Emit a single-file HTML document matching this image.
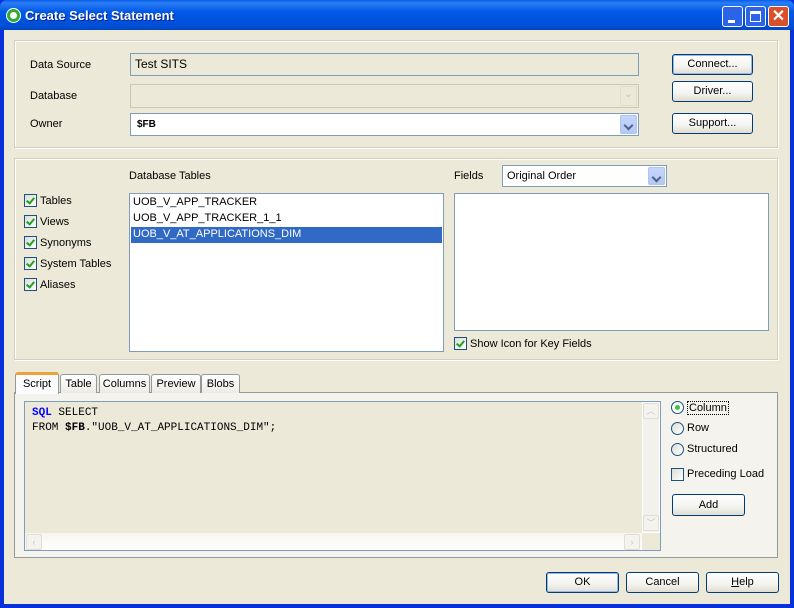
<!DOCTYPE html>
<html><head><style>
*{box-sizing:border-box;margin:0;padding:0}
body{width:794px;height:608px;overflow:hidden;font-family:"Liberation Sans",sans-serif;font-size:11px;color:#000;background:#0831d9;position:relative}
.a{position:absolute}
#title{left:0;top:0;width:794px;height:30px;background:linear-gradient(#0a5fe8,#2b7df5 10%,#0058e6 40%,#0050d8 85%,#0046c0);border-radius:7px 7px 0 0}
#client{left:4px;top:30px;width:786px;height:574px;background:#ece9d8}
.grp{border:1px solid #d0d0bf;box-shadow:inset 1px 1px 0 #fff,1px 1px 0 #fff}
.btn{border:1px solid #003c74;border-radius:3px;background:linear-gradient(#fff,#f3f3ef 60%,#e0ddd0);text-align:center;line-height:19px;font-size:11px}
.edit{border:1px solid #7f9db9;background:#fff}
.cb{width:13px;height:13px;border:1px solid #1c5180;background:linear-gradient(135deg,#dcdcd5,#fff)}
.cb.on::after{content:"";position:absolute;left:3px;top:1px;width:3px;height:6px;border:solid #21a121;border-width:0 2px 2px 0;transform:rotate(40deg)}
.dd{width:17px;border-radius:2px;background:linear-gradient(#c6d6fc,#b4c8f6);border:1px solid #b0c4f0}
.dd::after{content:"";position:absolute;left:4px;top:6px;width:5px;height:5px;border:solid #4d6185;border-width:0 2px 2px 0;transform:rotate(45deg)}
.rad{width:13px;height:13px;border:1px solid #1c5180;border-radius:50%;background:linear-gradient(135deg,#dcdcd5,#fff)}
.tab{top:374px;height:19px;border:1px solid #919b9c;border-bottom:none;border-radius:3px 3px 0 0;background:linear-gradient(#fff,#ecebe5);text-align:center;line-height:18px}
.mono{font-family:"Liberation Mono",monospace;font-size:11px}
.sb{background:#f3f1ec}
.arr{width:16px;height:16px;border:1px solid #e0ded4;border-radius:2px;background:#f4f3ee;color:#c8c6bc;font-size:9px;text-align:center;line-height:14px}
</style></head><body>
<div class="a" id="title"></div>
<div class="a" style="left:6px;top:8px;width:15px;height:15px;border-radius:50%;background:#3a3;border:1px solid #fff"><div class="a" style="left:3px;top:3px;width:7px;height:7px;border-radius:50%;background:#fff"></div></div>
<div class="a" style="left:25px;top:8px;color:#fff;font-weight:bold;font-size:13px;text-shadow:1px 1px #0a1e8a">Create Select Statement</div>
<div class="a" style="left:722px;top:6px;width:21px;height:21px;border:1px solid #fff;border-radius:3px;background:#2c64e8"><div class="a" style="left:5px;top:13px;width:7px;height:3px;background:#fff"></div></div>
<div class="a" style="left:745px;top:6px;width:21px;height:21px;border:1px solid #fff;border-radius:3px;background:#2c64e8"><div class="a" style="left:4px;top:4px;width:11px;height:11px;border:1px solid #fff;border-top-width:3px"></div></div>
<div class="a" style="left:768px;top:6px;width:21px;height:21px;border:1px solid #fff;border-radius:3px;background:#d9502c;color:#fff;font-size:16px;font-weight:bold;text-align:center;line-height:19px">✕</div>
<div class="a" id="client"></div>

<div class="a grp" style="left:14px;top:40px;width:764px;height:108px"></div>
<div class="a" style="left:30px;top:59px">Data Source</div>
<div class="a" style="left:130px;top:53px;width:509px;height:23px;border:1px solid #7f9db9;padding:3px 4px;font-size:12px">Test SITS</div>
<div class="a btn" style="left:672px;top:54px;width:81px;height:21px;box-shadow:inset 0 0 0 1px #98b8ea">Connect...</div>
<div class="a" style="left:30px;top:90px">Database</div>
<div class="a" style="left:130px;top:84px;width:509px;height:24px;border:1px solid #c9c7ba"></div>
<div class="a" style="left:620px;top:86px;width:17px;height:20px;border:1px solid #e0ded0;color:#c9c7ba;text-align:center">⌄</div>
<div class="a btn" style="left:672px;top:81px;width:81px;height:21px">Driver...</div>
<div class="a" style="left:30px;top:118px">Owner</div>
<div class="a edit" style="left:130px;top:113px;width:509px;height:23px;padding:5px 6px;font-weight:bold;font-size:10px">$FB</div>
<div class="a dd" style="left:620px;top:115px;height:19px"></div>
<div class="a btn" style="left:672px;top:113px;width:81px;height:21px">Support...</div>

<div class="a grp" style="left:14px;top:158px;width:764px;height:202px"></div>
<div class="a" style="left:129px;top:170px">Database Tables</div>
<div class="a cb on" style="left:24px;top:194px"></div><div class="a" style="left:40px;top:195px">Tables</div>
<div class="a cb on" style="left:24px;top:215px"></div><div class="a" style="left:40px;top:216px">Views</div>
<div class="a cb on" style="left:24px;top:236px"></div><div class="a" style="left:40px;top:237px">Synonyms</div>
<div class="a cb on" style="left:24px;top:257px"></div><div class="a" style="left:40px;top:258px">System Tables</div>
<div class="a cb on" style="left:24px;top:278px"></div><div class="a" style="left:40px;top:279px">Aliases</div>
<div class="a edit" style="left:129px;top:193px;width:315px;height:159px"></div>
<div class="a" style="left:133px;top:196px">UOB_V_APP_TRACKER</div>
<div class="a" style="left:133px;top:212px">UOB_V_APP_TRACKER_1_1</div>
<div class="a" style="left:131px;top:227px;width:311px;height:16px;background:#316ac5;color:#fff;padding:1px 2px">UOB_V_AT_APPLICATIONS_DIM</div>
<div class="a" style="left:454px;top:170px">Fields</div>
<div class="a edit" style="left:502px;top:165px;width:165px;height:22px;padding:4px 4px">Original Order</div>
<div class="a dd" style="left:648px;top:167px;height:18px"></div>
<div class="a edit" style="left:454px;top:193px;width:315px;height:138px"></div>
<div class="a cb on" style="left:454px;top:337px"></div><div class="a" style="left:470px;top:338px">Show Icon for Key Fields</div>

<div class="a" style="left:14px;top:392px;width:764px;height:166px;border:1px solid #919b9c;background:#f4f3ee"></div>
<div class="a tab" style="left:15px;top:372px;width:44px;height:22px;background:#fcfcfe;border-top:3px solid #e8a33d">Script</div>
<div class="a tab" style="left:60px;width:37px">Table</div>
<div class="a tab" style="left:99px;width:51px">Columns</div>
<div class="a tab" style="left:151px;width:50px">Preview</div>
<div class="a tab" style="left:201px;width:39px">Blobs</div>
<div class="a" style="left:24px;top:401px;width:637px;height:150px;border:1px solid #7f9db9;background:#ece9d8"></div>
<div class="a mono" style="left:32px;top:406px;line-height:15px"><span style="color:#00f;font-weight:bold">SQL</span> SELECT<br>FROM <b>$FB</b>."UOB_V_AT_APPLICATIONS_DIM";</div>
<div class="a sb" style="left:642px;top:402px;width:18px;height:131px;border:1px solid #fff"></div>
<div class="a arr" style="left:643px;top:403px">︿</div>
<div class="a arr" style="left:643px;top:515px">﹀</div>
<div class="a" style="left:25px;top:533px;width:617px;height:17px;background:linear-gradient(#f6f5f0,#fff)"></div>
<div class="a arr" style="left:26px;top:534px">‹</div>
<div class="a arr" style="left:624px;top:534px">›</div>
<div class="a rad" style="left:671px;top:401px;box-shadow:inset 0 0 0 3px #fff"><div class="a" style="left:3px;top:3px;width:5px;height:5px;border-radius:50%;background:#3c3"></div></div>
<div class="a" style="left:687px;top:401px;border:1px dotted #000;padding:0 1px">Column</div>
<div class="a rad" style="left:671px;top:422px"></div><div class="a" style="left:687px;top:422px">Row</div>
<div class="a rad" style="left:671px;top:443px"></div><div class="a" style="left:687px;top:443px">Structured</div>
<div class="a cb" style="left:671px;top:468px"></div><div class="a" style="left:687px;top:468px">Preceding Load</div>
<div class="a btn" style="left:672px;top:494px;width:73px;height:22px;line-height:20px">Add</div>

<div class="a btn" style="left:546px;top:572px;width:73px;height:21px;box-shadow:inset 0 0 0 1px #98b8ea">OK</div>
<div class="a btn" style="left:626px;top:572px;width:73px;height:21px">Cancel</div>
<div class="a btn" style="left:706px;top:572px;width:73px;height:21px"><u>H</u>elp</div>
</body></html>
